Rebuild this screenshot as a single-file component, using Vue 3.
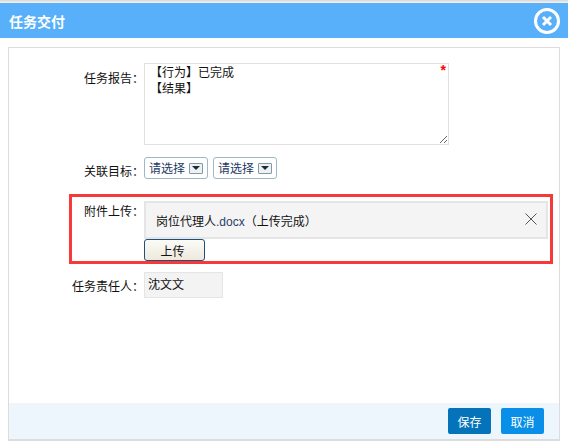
<script setup>
const report = '【行为】已完成\n【结果】'
const selects = ['请选择', '请选择']
</script>

<template>
  <div class="dialog">
    <div class="top-strip"></div>
    <header class="header">
      <span class="title">任务交付</span>
      <svg class="close" width="28" height="28" viewBox="0 0 28 28">
        <circle cx="14" cy="14" r="11.5" fill="none" stroke="#fff" stroke-width="3" />
        <path d="M10 10 L18 18 M18 10 L10 18" stroke="#fff" stroke-width="3" />
      </svg>
    </header>

    <section class="panel">
      <div class="form">
        <div class="row">
          <label class="label">任务报告：</label>
          <div class="report">
            <textarea class="report-input" readonly :value="report"></textarea>
            <span class="required">*</span>
          </div>
        </div>

        <div class="row row-target">
          <label class="label label-mid">关联目标：</label>
          <div class="selects">
            <div v-for="(s, i) in selects" :key="i" class="select">
              <span class="select-text">{{ s }}</span>
              <span class="arrow-box"><i class="arrow"></i></span>
            </div>
          </div>
        </div>

        <div class="row row-upload">
          <label class="label label-upload">附件上传：</label>
          <div class="upload">
            <div class="file">
              <span class="file-name">岗位代理人<span class="ext">.docx</span>（上传完成）</span>
              <svg class="file-remove" width="12" height="12" viewBox="0 0 12 12">
                <path d="M0.5 0.5 L11.5 11.5 M11.5 0.5 L0.5 11.5" stroke="#555" stroke-width="1" />
              </svg>
            </div>
            <button class="upload-btn" type="button">上传</button>
          </div>
        </div>

        <div class="row row-owner">
          <label class="label label-owner">任务责任人：</label>
          <div class="owner">沈文文</div>
        </div>
      </div>

      <footer class="footer">
        <button class="btn btn-save" type="button">保存</button>
        <button class="btn btn-cancel" type="button">取消</button>
      </footer>
    </section>
  </div>
</template>

<style>
html,
body {
  margin: 0;
  background: #fff;
}
</style>

<style scoped>
.dialog {
  width: 568px;
  height: 445px;
  overflow: hidden;
  font-family: "Noto Sans CJK SC", "Liberation Sans", sans-serif;
  font-size: 12px;
  color: #111;
  background: #fff;
}

.top-strip {
  height: 3px;
  background: linear-gradient(#d8d8d8, #f4f4f4);
}

.header {
  height: 35px;
  display: flex;
  align-items: center;
  justify-content: space-between;
  padding: 0 7px 0 9px;
  background: #58b0fb;
}

.title {
  color: #fff;
  font-weight: 700;
  font-size: 14px;
}

.close {
  display: block;
}

.panel {
  box-sizing: border-box;
  width: 552px;
  height: 394px;
  margin: 9px 0 0 8px;
  border: 1px solid #dcdcdc;
  border-bottom-width: 2px;
  display: flex;
  flex-direction: column;
}

.form {
  flex: 1;
  padding-top: 15px;
}

.row {
  display: flex;
  align-items: flex-start;
}

.label {
  width: 135px;
  flex: none;
  text-align: right;
  line-height: 18px;
  padding-top: 6px;
}

.report {
  position: relative;
  width: 305px;
  height: 82px;
}

.report-input {
  box-sizing: border-box;
  display: block;
  width: 305px;
  height: 82px;
  margin: 0;
  padding: 0 5px;
  border: 1px solid #e0e0e0;
  outline: none;
  font: inherit;
  line-height: 16px;
  color: #111;
  resize: both;
}

.required {
  position: absolute;
  top: 0;
  right: 3px;
  color: #f00;
  font-family: "Liberation Sans", sans-serif;
  font-size: 14px;
  font-weight: 700;
  line-height: 14px;
}

.row-target {
  height: 22px;
  margin-top: 12px;
}

.label-mid {
  padding-top: 5px;
}

.selects {
  display: flex;
  gap: 5px;
}

.select {
  box-sizing: border-box;
  height: 22px;
  width: 64px;
  display: flex;
  align-items: center;
  justify-content: space-between;
  padding: 0 4px 0 4px;
  border: 1px solid #9db8c8;
  border-radius: 3px;
  color: #1b3a63;
}

.select-text {
  margin-top: -2px;
}

.arrow-box {
  box-sizing: border-box;
  width: 14px;
  height: 11px;
  display: flex;
  align-items: center;
  justify-content: center;
  background: #f0f0f0;
  border: 1px solid #7d9aad;
  border-radius: 1px;
}

.arrow {
  width: 0;
  height: 0;
  border-left: 4px solid transparent;
  border-right: 4px solid transparent;
  border-top: 4px solid #1b2b3f;
}

.row-upload {
  box-sizing: border-box;
  width: 484px;
  height: 70px;
  margin: 15px 0 0 60px;
  padding-top: 4px;
  border: 3px solid #f63a3a;
}

.label-upload {
  width: 72px;
  padding-top: 1px;
}

.upload {
  width: 404px;
}

.file {
  box-sizing: border-box;
  height: 38px;
  display: flex;
  align-items: center;
  justify-content: space-between;
  padding: 0 9px 0 10px;
  background: #f4f4f4;
  border: 2px solid #e5e5e5;
}

.ext {
  font-family: "Liberation Sans", sans-serif;
  color: #2a3f66;
}

.file-remove {
  display: block;
  margin-top: -3px;
}

.upload-btn {
  display: block;
  box-sizing: border-box;
  width: 61px;
  height: 22px;
  margin-top: 0;
  padding: 0 4px 0 0;
  border: 1px solid #1f4f7a;
  border-radius: 3px;
  background: linear-gradient(#fbfbf7, #ece9dc);
  font: inherit;
  color: #111;
}

.row-owner {
  margin-top: 8px;
}

.label-owner {
  padding-top: 5px;
}

.owner {
  box-sizing: border-box;
  width: 79px;
  height: 26px;
  padding: 2px 3px;
  line-height: 18px;
  background: #f3f3f3;
  border: 1px solid #e5e5e5;
}

.footer {
  flex: none;
  height: 36px;
  display: flex;
  justify-content: flex-end;
  gap: 10px;
  padding: 5px 15px 0 0;
  box-sizing: border-box;
  background: #eef6fd;
}

.btn {
  width: 43px;
  height: 26px;
  padding: 0;
  border: none;
  border-radius: 2px;
  font: inherit;
  color: #fff;
}

.btn-save {
  background: #0573b9;
}

.btn-cancel {
  background: #0a8fe8;
}
</style>
